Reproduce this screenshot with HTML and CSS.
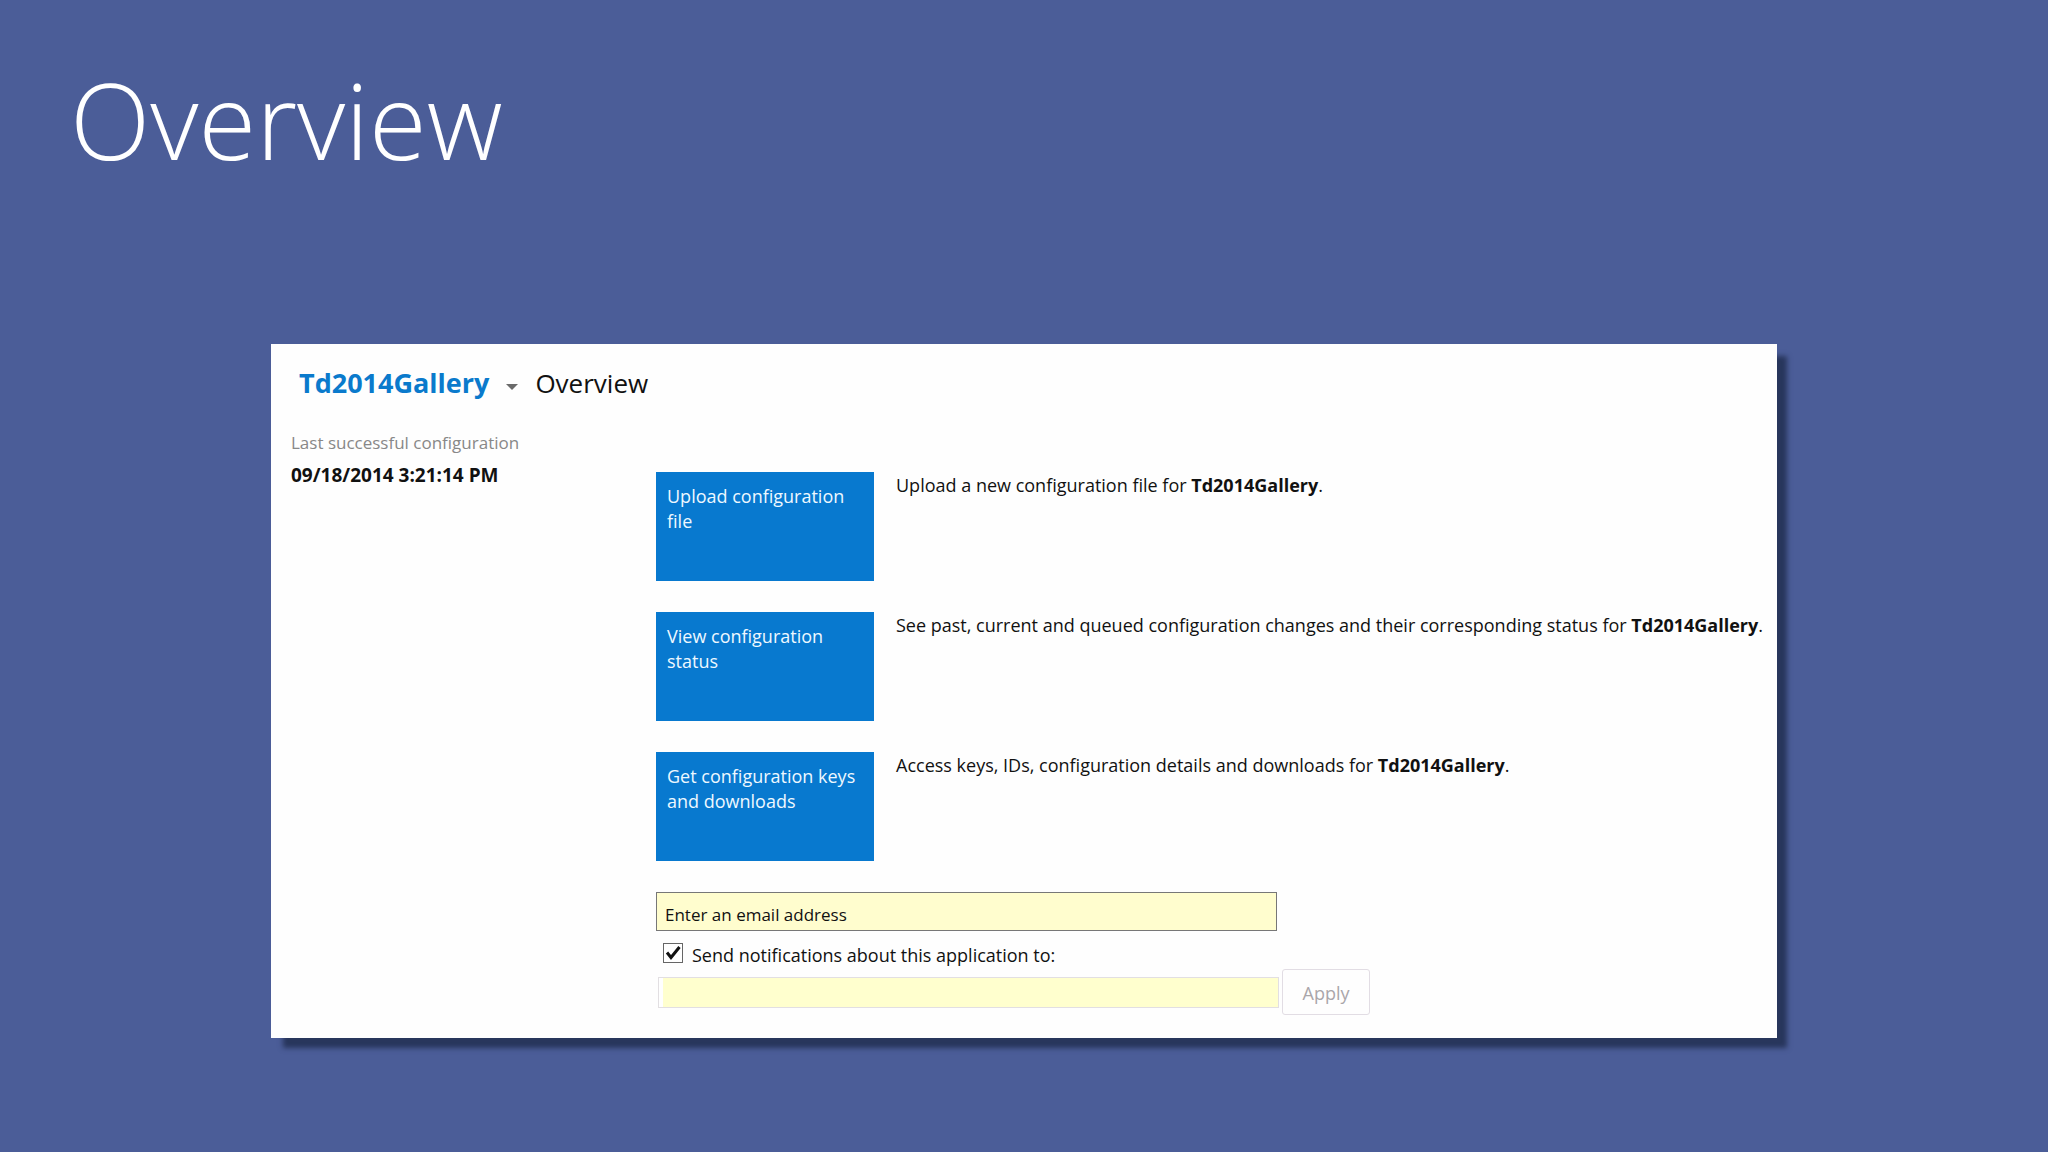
FILE: index.html
```html
<!DOCTYPE html>
<html lang="en">
<head>
<meta charset="utf-8">
<title>Overview</title>
<link rel="stylesheet" href="styles.css">
</head>
<body>
<main class="slide">
  <h1 class="slide-title">Overview</h1>
  <section class="panel">
    <header class="panel-head">
      <a class="app-name" href="#">Td2014Gallery</a>
      <button class="caret" type="button" aria-label="Switch application">
        <svg width="12" height="6" viewBox="0 0 12 6"><path d="M0 0h12L6 6z" fill="#6a6a6a"/></svg>
      </button>
      <h2 class="page-name">Overview</h2>
    </header>
    <div class="panel-body">
      <aside class="status">
        <p class="status-label">Last successful configuration</p>
        <p class="status-date">09/18/2014 3:21:14 PM</p>
      </aside>
      <div class="content">
        <div class="action">
          <button class="tile" type="button">Upload configuration file</button>
          <p class="desc">Upload a new configuration file for <b>Td2014Gallery</b>.</p>
        </div>
        <div class="action">
          <button class="tile" type="button">View configuration status</button>
          <p class="desc">See past, current and queued configuration changes and their corresponding status for <b>Td2014Gallery</b>.</p>
        </div>
        <div class="action">
          <button class="tile" type="button">Get configuration keys and downloads</button>
          <p class="desc">Access keys, IDs, configuration details and downloads for <b>Td2014Gallery</b>.</p>
        </div>
        <form class="notify">
          <input class="email" type="text" value="Enter an email address" aria-label="Email address">
          <div class="check-row">
            <span class="check">
              <input class="check-box" type="checkbox" id="send" checked>
              <svg class="check-mark" width="20" height="20" viewBox="0 0 20 20"><path d="M4 9.500L8 14.500L16.500 4" fill="none" stroke="#111" stroke-width="3"/></svg>
            </span>
            <label for="send">Send notifications about this application to:</label>
          </div>
          <div class="apply-row">
            <input class="recipient" type="text" aria-label="Notification recipient">
            <button class="apply" type="button" disabled>Apply</button>
          </div>
        </form>
      </div>
    </div>
  </section>
</main>
</body>
</html>
```
FILE: styles.css
```css
* {
  box-sizing: border-box;
}

body {
  margin: 0;
  background: #4b5d98;
  color: #111;
  font: 18px/25px "Open Sans", "Noto Sans", sans-serif;
}

h1, h2, p {
  margin: 0;
}

button, input {
  font: inherit;
  color: inherit;
  margin: 0;
}

.slide {
  min-height: 100vh;
  padding: 48px 271px;
}

.slide-title {
  margin: 0 0 152px -201px;
  color: #fff;
  font-size: 105px;
  font-weight: 300;
  line-height: 144px;
}

.panel {
  padding: 21px 12px 23px 20px;
  background: #fefefe;
  box-shadow: 11px 11px 5px -1px #28365c;
}

.panel-head {
  display: flex;
  align-items: center;
  gap: 17px;
  padding-left: 8px;
  line-height: 36px;
}

.app-name {
  color: #0a7acc;
  font-size: 27px;
  font-weight: 700;
  text-decoration: none;
}

.caret {
  display: flex;
  padding: 8px 0 0;
  border: 0;
  background: none;
}

.page-name {
  font-size: 26px;
  font-weight: 400;
}

.panel-body {
  display: grid;
  grid-template-columns: 365px 1fr;
}

.status {
  padding-top: 29px;
}

.status-label {
  color: #888;
  font-size: 17px;
}

.status-date {
  margin-top: 4px;
  font-size: 19px;
  font-weight: 700;
  line-height: 32px;
}

.content {
  display: flex;
  flex-direction: column;
  gap: 31px;
  padding-top: 71px;
}

.action {
  display: flex;
  align-items: flex-start;
  gap: 22px;
}

.tile {
  display: flex;
  flex: 0 0 218px;
  height: 109px;
  padding: 12px 11px;
  border: 0;
  background: #0879cf;
  color: #eef8ff;
  text-align: left;
}

.desc {
  padding-top: 1px;
}

.notify {
  display: flex;
  flex-direction: column;
}

.email {
  width: 621px;
  height: 39px;
  padding: 5px 8px 0;
  border: 1px solid #777;
  background: #fffdce;
  font-size: 17px;
}

.check-row {
  display: flex;
  gap: 9px;
  padding: 12px 0 1px 7px;
}

.check {
  display: grid;
  width: 20px;
  height: 20px;
}

.check-box,
.check-mark {
  grid-area: 1 / 1;
}

.check-box {
  width: 20px;
  height: 20px;
  border: 1px solid #666;
  background: #fff;
  appearance: none;
}

.check-mark {
  pointer-events: none;
}

.apply-row {
  display: flex;
  align-items: center;
  gap: 3px;
  padding-left: 2px;
}

.recipient {
  width: 621px;
  height: 31px;
  padding: 0 8px;
  border: 1px solid #e2dfe2;
  background: #ffffce;
  box-shadow: inset 4px 0 #fff;
}

.apply {
  width: 88px;
  height: 46px;
  padding: 2px 0 0;
  border: 1px solid #e2dde4;
  border-radius: 3px;
  background: #fefefe;
  color: #aaa6aa;
}
```
